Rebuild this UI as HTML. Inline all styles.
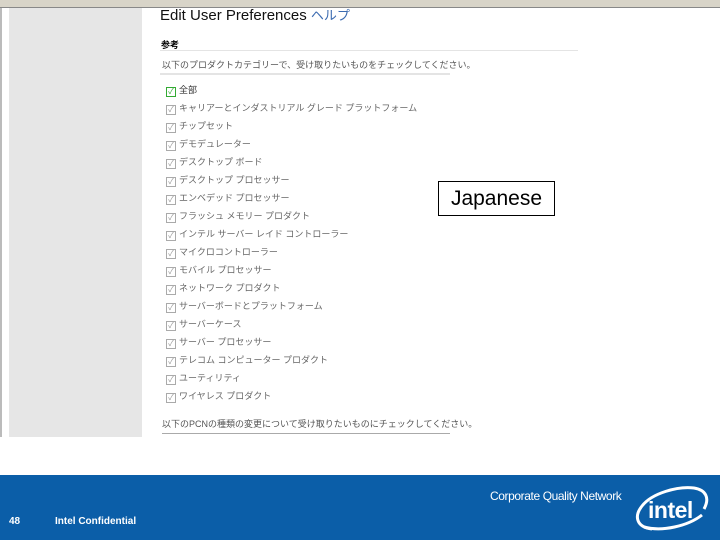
<!DOCTYPE html>
<html><head><meta charset="utf-8"><style>
body{margin:0;width:720px;height:540px;position:relative;overflow:hidden;background:#fff;font-family:"Liberation Sans","Noto Sans CJK JP",sans-serif;}
.tb{position:absolute;left:0;top:0;width:720px;height:7px;background:#d8d4c8;border-bottom:1px solid #888;}
.side{position:absolute;left:9px;top:8px;width:133px;height:429px;background:#e6e6e6;}
.lb{position:absolute;left:0;top:8px;width:2px;height:429px;background:#bbb;}
.title{position:absolute;left:160px;top:5px;font-size:15px;color:#111;}
.title span{color:#3a6ab0;font-size:13px;}
.h{position:absolute;left:161px;top:38px;font-size:9px;font-weight:bold;}
.line{position:absolute;height:1px;background:#e4e4e4;}
.d{position:absolute;left:162px;top:58px;font-size:9px;color:#555;}
.it{position:absolute;left:166px;font-size:9px;color:#666;height:12px;line-height:12px;}
.cb{display:inline-block;width:8px;height:8px;border:1px solid #aaa;margin-right:3px;vertical-align:-1px;font-size:8px;line-height:8px;color:#999;text-align:center;}
.jp{position:absolute;left:438px;top:181px;width:115px;height:33px;border:1px solid #000;font-size:21px;line-height:33px;text-align:center;color:#000;}
.foot{position:absolute;left:0;top:475px;width:720px;height:65px;background:#0b5ea8;color:#fff;}
</style></head><body>
<div class="tb"></div><div class="lb"></div>
<div class="side"></div>
<div class="title">Edit User Preferences <span>ヘルプ</span></div>
<div class="h">参考</div>
<div class="line" style="left:160px;top:50px;width:418px"></div>
<div class="d">以下のプロダクトカテゴリーで、受け取りたいものをチェックしてください。</div>
<div class="line" style="left:160px;top:73px;width:290px;height:2px"></div>
<div class="it" style="top:84px;color:#333"><span class="cb" style="border-color:#3a3;color:#3a3">✓</span>全部</div>
<div class="it" style="top:102px"><span class="cb">✓</span>キャリアーとインダストリアル グレード プラットフォーム</div>
<div class="it" style="top:120px"><span class="cb">✓</span>チップセット</div>
<div class="it" style="top:138px"><span class="cb">✓</span>デモデュレーター</div>
<div class="it" style="top:156px"><span class="cb">✓</span>デスクトップ ボード</div>
<div class="it" style="top:174px"><span class="cb">✓</span>デスクトップ プロセッサー</div>
<div class="it" style="top:192px"><span class="cb">✓</span>エンベデッド プロセッサー</div>
<div class="it" style="top:210px"><span class="cb">✓</span>フラッシュ メモリー プロダクト</div>
<div class="it" style="top:228px"><span class="cb">✓</span>インテル サーバー レイド コントローラー</div>
<div class="it" style="top:246px"><span class="cb">✓</span>マイクロコントローラー</div>
<div class="it" style="top:264px"><span class="cb">✓</span>モバイル プロセッサー</div>
<div class="it" style="top:282px"><span class="cb">✓</span>ネットワーク プロダクト</div>
<div class="it" style="top:300px"><span class="cb">✓</span>サーバーボードとプラットフォーム</div>
<div class="it" style="top:318px"><span class="cb">✓</span>サーバーケース</div>
<div class="it" style="top:336px"><span class="cb">✓</span>サーバー プロセッサー</div>
<div class="it" style="top:354px"><span class="cb">✓</span>テレコム コンピューター プロダクト</div>
<div class="it" style="top:372px"><span class="cb">✓</span>ユーティリティ</div>
<div class="it" style="top:390px"><span class="cb">✓</span>ワイヤレス プロダクト</div>
<div class="d" style="top:417px">以下のPCNの種類の変更について受け取りたいものにチェックしてください。</div>
<div class="line" style="left:162px;top:433px;width:288px;background:#aaa"></div>
<div class="jp">Japanese</div>
<div class="foot">
<div style="position:absolute;left:490px;top:14px;font-size:12px;letter-spacing:-0.4px">Corporate Quality Network</div>
<div style="position:absolute;left:9px;top:41px;font-size:10px;font-weight:bold">48</div>
<div style="position:absolute;left:55px;top:41px;font-size:10px;font-weight:bold">Intel Confidential</div>
<svg style="position:absolute;left:632px;top:7px" width="80" height="52" viewBox="0 0 80 52">
<path d="M20 47 C4 45 2 34 10 24 C20 11 46 4 62 6 C74 8 78 16 72 27" fill="none" stroke="#fff" stroke-width="3"/>
<path d="M12 45 C30 50 56 44 70 33" fill="none" stroke="#fff" stroke-width="3"/>
<text x="16" y="36" font-family="Liberation Sans" font-weight="bold" font-size="23" fill="#fff" letter-spacing="-0.5">intel</text>
</svg>
</div>
</body></html>
